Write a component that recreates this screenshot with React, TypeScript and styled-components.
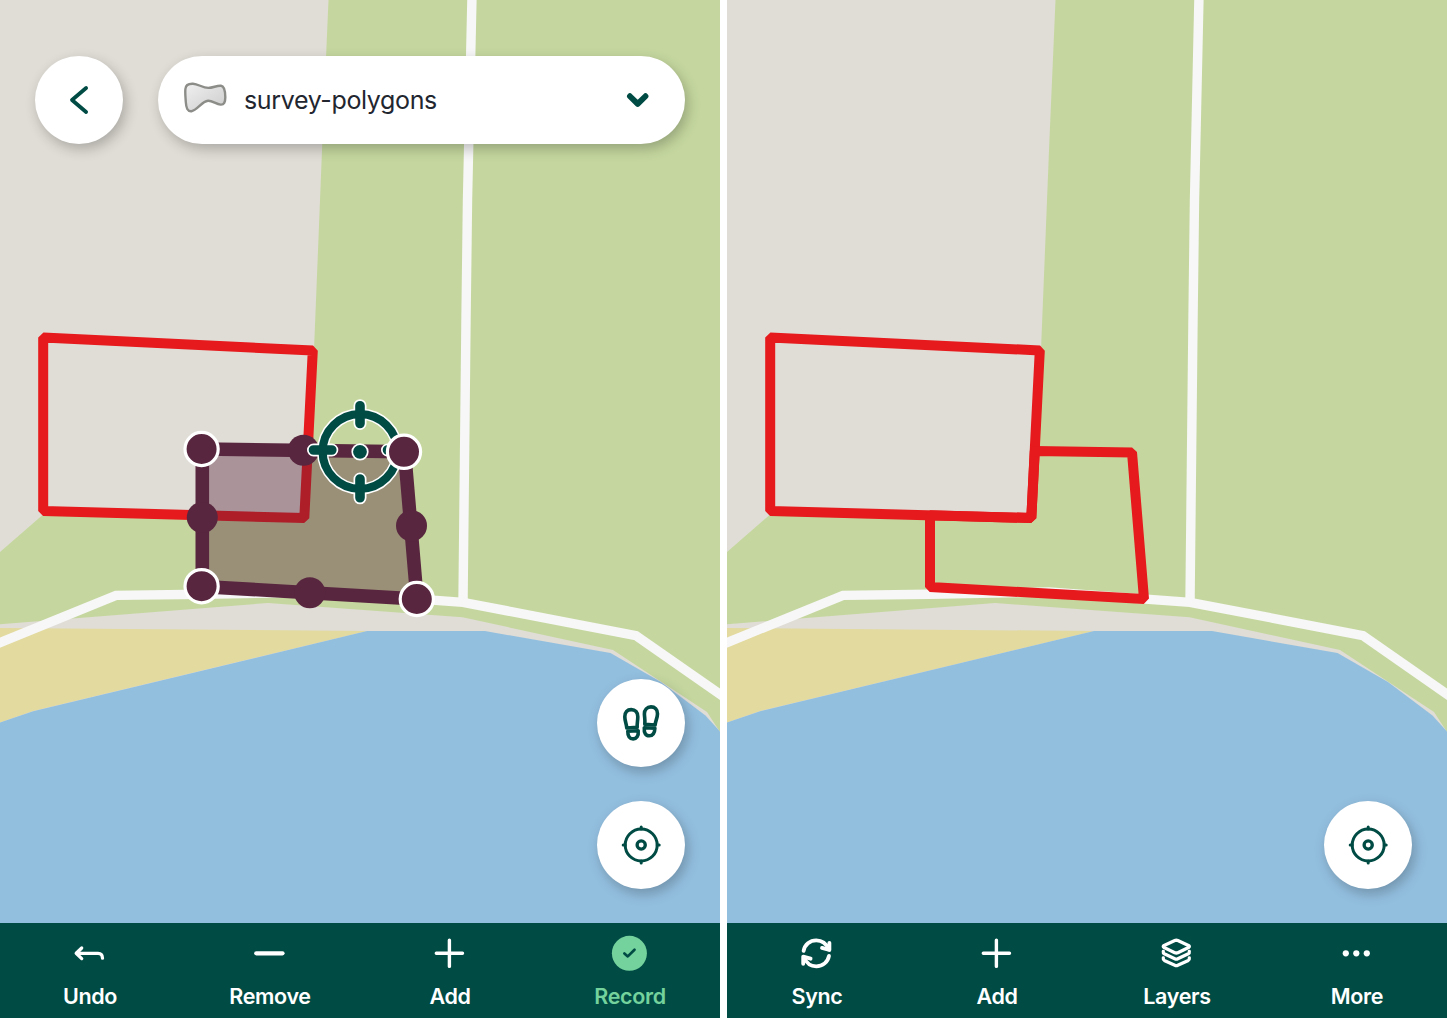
import React from "react";
import styled, { createGlobalStyle } from "styled-components";

const DEEP = "#004b44";
const MINT = "#74d29c";
const PLUM = "#59263f";
const RED = "#e6191c";

const GlobalStyle = createGlobalStyle`
  * { box-sizing: border-box; }
  body { margin: 0; background: #fff; font-family: Inter, "Liberation Sans", sans-serif; }
  button { border: 0; padding: 0; font: inherit; color: inherit; background: none; cursor: pointer; }
  svg { display: block; }
`;

const Screens = styled.main`
  display: flex;
  gap: 7px;
  width: 1447px;
  height: 1018px;
  overflow: hidden;
  background: #fff;
`;

const Screen = styled.section`
  flex: 0 0 720px;
  display: grid;
  grid-template-rows: 923px 95px;
  overflow: hidden;
`;

const MapArea = styled.div`
  display: grid;
  grid-template: 100% / 100%;
  overflow: hidden;
`;

const MapCanvas = styled.svg`
  grid-area: 1 / 1;
  width: 720px;
  height: 923px;
`;

const Overlay = styled.div`
  grid-area: 1 / 1;
  z-index: 1;
  display: flex;
  flex-direction: column;
  justify-content: space-between;
  padding: 56px 35px 34.5px;
`;

const TopControls = styled.header`
  display: flex;
  gap: 35px;
`;

const SideControls = styled.div`
  display: flex;
  flex-direction: column;
  align-items: flex-end;
  gap: 34px;
  margin-top: auto;
`;

const RoundButton = styled.button`
  flex: none;
  display: flex;
  align-items: center;
  justify-content: center;
  width: 88px;
  height: 88px;
  border-radius: 50%;
  background: #fff;
  box-shadow: 3px 5px 13px rgba(0, 0, 0, 0.24);
`;

const LayerPicker = styled.button`
  flex: 1;
  display: flex;
  align-items: center;
  height: 88px;
  padding: 0 35px 0 26px;
  border-radius: 44px;
  background: #fff;
  box-shadow: 3px 5px 13px rgba(0, 0, 0, 0.24);
`;

const LayerName = styled.span`
  flex: 1;
  padding-left: 17px;
  text-align: left;
  font-size: 25px;
  line-height: 30px;
  letter-spacing: -0.36px;
  color: #22262f;
`;

const Toolbar = styled.nav`
  display: grid;
  grid-template-columns: repeat(4, 1fr);
  background: ${DEEP};
`;

const Tool = styled.button<{ $accent?: boolean }>`
  display: flex;
  flex-direction: column;
  align-items: center;
  gap: 10px;
  padding-top: 10px;
  color: ${(p) => (p.$accent ? MINT : "#fff")};
  font-size: 21.5px;
  font-weight: 600;
  line-height: 26px;
  letter-spacing: -0.35px;
`;

const Stroked = styled.svg<{ $w: number }>`
  fill: none;
  stroke: currentColor;
  stroke-width: ${(p) => p.$w};
  stroke-linecap: round;
  stroke-linejoin: round;
`;

const ToolIcon = ({ w = 3.3, children }: { w?: number; children: React.ReactNode }) => (
  <Stroked $w={w} width="40" height="40" viewBox="0 0 40 40">{children}</Stroked>
);

const PlusIcon = () => (
  <ToolIcon w={3.4}><path d="M6.3 20.3H32.5M19.4 7.2V33.4" /></ToolIcon>
);

const LocateIcon = () => (
  <Stroked $w={3} width="44" height="44" viewBox="0 0 44 44" color={DEEP}>
    <circle cx="22.2" cy="22" r="16" />
    <circle cx="22.2" cy="22" r="4.1" strokeWidth="3.3" />
    <path d="M22.2 4V6M22.2 38V40M4.2 22H6.2M38.2 22H40.2" strokeWidth="3" />
  </Stroked>
);

const FootprintsIcon = () => (
  <Stroked $w={3.6} width="44" height="44" viewBox="0 0 44 44" color={DEEP}>
    <path d="M7.8 27C7.4 22.7 5.8 19.7 5.8 15.7C5.8 11.2 8.3 8.6 12.2 8.6C16.3 8.6 18.8 11.5 18.8 15.7C18.8 19.7 17.9 22.7 18.2 26.3Z" />
    <path d="M8.8 30.2L19.2 29.7C19.8 35 17.4 37.9 14.2 37.9C10.7 37.9 8.7 35.2 8.8 30.2Z" />
    <path d="M25.8 23.2L36.1 24C36.5 19.7 38.5 16.7 38.5 12.7C38.5 8.4 35.9 5.9 32 5.9C28 5.9 25.3 8.8 25.4 12.9C25.5 16.7 26.3 19.2 25.8 23.2Z" />
    <path d="M25.3 26.7L35.9 27.3C35.7 32.2 33.6 34.8 30.3 34.8C26.8 34.8 24.8 31.9 25.3 26.7Z" />
  </Stroked>
);

const PolygonIcon = () => (
  <svg width="43" height="36" viewBox="0 0 43 36">
    <defs>
      <linearGradient id="polygonFill" x1="0" y1="0" x2="1" y2="1">
        <stop offset="0" stopColor="#f0f0f0" />
        <stop offset="1" stopColor="#cccccc" />
      </linearGradient>
    </defs>
    <path
      d="M1.4 7C1.7 3.2 4.5 1.5 9 1.7C14.5 2.1 18.5 5.9 24.3 5.9C29 5.9 33 3.3 37 3.8C40.4 4.2 41.2 10 41.3 15C41.4 20 40 22.9 36.6 22.6C32 22.2 28.5 18.6 24 18.8C18 19.2 13 28.5 7.5 29.2C3.4 29.6 2.2 26 1.8 20C1.5 15 1 11 1.4 7Z"
      fill="url(#polygonFill)"
      stroke="#8c8c88"
      strokeWidth="2.4"
    />
  </svg>
);

const BaseMap = () => (
  <>
    <rect width="720" height="923" fill="#e0ddd6" />
    <path d="M328.5 0L322.3 143L314 350L304 518L42 515.5L0 552V624.3L268 603L462.5 617.3L613 650L707 712L720 732V0Z" fill="#c5d79f" />
    <path d="M0 628L367 631L33 711L0 722.5Z" fill="#e2da9f" />
    <path d="M0 722.5L33 711.2L367 631H485L610.5 653L661 682L705.5 715.5L720 731.5V923H0Z" fill="#93bfdf" />
    <g fill="none" stroke="#f7f7f7" strokeWidth="9.4">
      <path d="M472 -4L467.5 200L466 320L463 602" />
      <path d="M-6 645L116 595.4L203 594.2L322 592L463 602.3L636 635.6L726 698.5" />
    </g>
  </>
);

const SavedPlot = () => (
  <path d="M43.2 337.5L312.8 350.5L304.3 518L43.2 511Z" fill="none" stroke={RED} strokeWidth="10" strokeLinejoin="bevel" />
);

const CROSSHAIR_TICKS = "M360 405.7V423.5M360 479V497.8M313.5 450H331.8M387.5 450H404";

const Crosshair = () => (
  <g fill="none" strokeLinecap="round">
    <g stroke="#fff">
      <circle cx="360" cy="451.5" r="37.4" strokeWidth="11.2" />
      <path d={CROSSHAIR_TICKS} strokeWidth="13" />
      <circle cx="360" cy="451.8" r="8.6" fill="#fff" stroke="none" />
    </g>
    <g stroke={DEEP}>
      <circle cx="360" cy="451.5" r="37.4" strokeWidth="8.2" />
      <path d={CROSSHAIR_TICKS} strokeWidth="9.6" />
      <circle cx="360" cy="451.8" r="6.9" fill={DEEP} stroke="none" />
    </g>
  </g>
);

const midpoints = [[303.5, 450.3], [202.3, 517.5], [309.8, 592.7], [411.5, 525.7]];
const vertices = [[201.6, 449], [404, 451.8], [416.8, 599], [201.6, 586.2]];

const EditedPlot = () => (
  <>
    <path d="M202.3 449L404.5 451.7L417 599L202.3 586.5Z" fill={PLUM} fillOpacity="0.4" />
    <path d="M202.3 449L404.5 451.7L417 599L202.3 586.5Z" fill="none" stroke={PLUM} strokeWidth="13.6" />
    {midpoints.map(([x, y]) => <circle key={x} cx={x} cy={y} r="15.5" fill={PLUM} />)}
    <Crosshair />
    {vertices.map(([x, y]) => (
      <circle key={`${x}-${y}`} cx={x} cy={y} r="16.6" fill={PLUM} stroke="#fff" strokeWidth="3.2" />
    ))}
  </>
);

const EditScreen = () => (
  <Screen>
    <MapArea>
      <MapCanvas viewBox="0 0 720 923">
        <BaseMap />
        <SavedPlot />
        <EditedPlot />
      </MapCanvas>
      <Overlay>
        <TopControls>
          <RoundButton aria-label="Back">
            <Stroked $w={3.8} width="44" height="44" viewBox="0 0 44 44" color={DEEP}>
              <path d="M29.1 10L15 22L29.1 34" />
            </Stroked>
          </RoundButton>
          <LayerPicker>
            <PolygonIcon />
            <LayerName>survey-polygons</LayerName>
            <Stroked $w={5.8} width="24" height="24" viewBox="0 0 24 24" color={DEEP}>
              <path d="M3.9 8.2L11.7 15.9L19.5 8.2" />
            </Stroked>
          </LayerPicker>
        </TopControls>
        <SideControls>
          <RoundButton aria-label="Track"><FootprintsIcon /></RoundButton>
          <RoundButton aria-label="Locate"><LocateIcon /></RoundButton>
        </SideControls>
      </Overlay>
    </MapArea>
    <Toolbar>
      <Tool>
        <ToolIcon>
          <path d="M11.7 15L6.2 20.3L11.7 25.6M6.7 20.3H28C31 20.3 32.5 22.2 32.5 25.2" />
        </ToolIcon>
        Undo
      </Tool>
      <Tool>
        <ToolIcon w={4.2}><path d="M6.3 20.3H32.5" /></ToolIcon>
        Remove
      </Tool>
      <Tool>
        <PlusIcon />
        Add
      </Tool>
      <Tool $accent>
        <ToolIcon w={2.7}>
          <circle cx="19.4" cy="20.3" r="17.5" fill={MINT} stroke="none" />
          <path d="M14.4 20.4L17.8 23.4L24.5 16.8" stroke={DEEP} />
        </ToolIcon>
        Record
      </Tool>
    </Toolbar>
  </Screen>
);

const BrowseScreen = () => (
  <Screen>
    <MapArea>
      <MapCanvas viewBox="0 0 720 923">
        <BaseMap />
        <SavedPlot />
        <path
          d="M307.8 451L405 452.4L417 599L203 587V515.3L304.3 518Z"
          fill="none"
          stroke={RED}
          strokeWidth="10"
          strokeLinejoin="bevel"
        />
      </MapCanvas>
      <Overlay>
        <SideControls>
          <RoundButton aria-label="Locate"><LocateIcon /></RoundButton>
        </SideControls>
      </Overlay>
    </MapArea>
    <Toolbar>
      <Tool>
        <ToolIcon w={3.8}>
          <path d="M6.6 17.8C7.8 11.6 12.8 7.3 19.3 7.3C25.4 7.3 29.4 10.8 31.6 16.2" />
          <path d="M32.4 9.8V17L25 14.9" />
          <path d="M32 22.8C30.8 29 25.8 33.3 19.3 33.3C13.2 33.3 9.2 29.8 7 24.4" />
          <path d="M6.2 30.8V23.6L13.6 25.7" />
        </ToolIcon>
        Sync
      </Tool>
      <Tool>
        <PlusIcon />
        Add
      </Tool>
      <Tool>
        <ToolIcon>
          <path d="M17.8 7.6Q19.3 6.9 20.8 7.6L31.5 12.4Q33.2 13.4 31.5 14.5L20.8 19.7Q19.3 20.3 17.8 19.7L7.1 14.5Q5.4 13.4 7.1 12.4Z" />
          <path d="M6.3 18.4C6.1 19.7 6.2 20.2 7.3 20.8L17.8 25.8Q19.3 26.5 20.8 25.8L31.3 20.8C32.4 20.2 32.5 19.7 32.3 18.4" />
          <path d="M6.3 25C6.1 26.3 6.2 26.8 7.3 27.4L17.8 32.2Q19.3 32.9 20.8 32.2L31.3 27.4C32.4 26.8 32.5 26.3 32.3 25" />
        </ToolIcon>
        Layers
      </Tool>
      <Tool>
        <ToolIcon>
          <g fill="currentColor" stroke="none">
            <circle cx="8.8" cy="20.3" r="3.1" />
            <circle cx="19.3" cy="20.3" r="3.1" />
            <circle cx="29.8" cy="20.3" r="3.1" />
          </g>
        </ToolIcon>
        More
      </Tool>
    </Toolbar>
  </Screen>
);

export default function App() {
  return (
    <>
      <GlobalStyle />
      <Screens>
        <EditScreen />
        <BrowseScreen />
      </Screens>
    </>
  );
}
